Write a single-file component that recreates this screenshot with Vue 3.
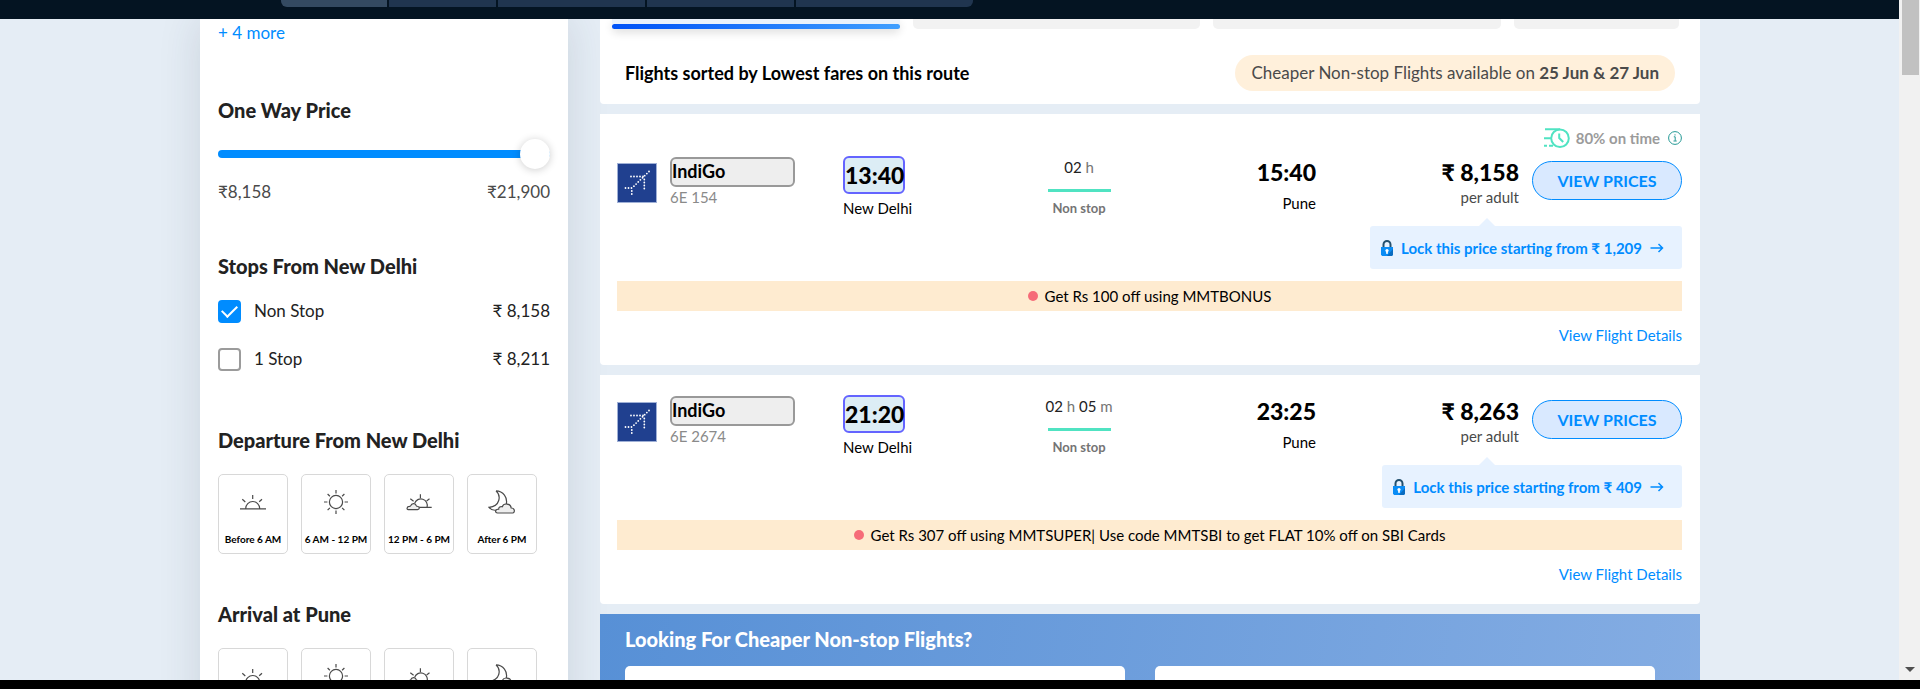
<script setup>
import { ref } from 'vue'

const tripTabs = ['From', 'To', 'Depart', 'Return', 'Travellers']
const price = ref(21900)
const stops = ref([
  { id: 'nonstop', label: 'Non Stop', fare: '₹ 8,158', checked: true },
  { id: 'onestop', label: '1 Stop', fare: '₹ 8,211', checked: false }
])
const icons = ['sunrise', 'sun', 'cloudsun', 'moon']
const timeGroups = [
  { title: 'Departure From New Delhi', labels: ['Before 6 AM', '6 AM - 12 PM', '12 PM - 6 PM', 'After 6 PM'] },
  { title: 'Arrival at Pune', labels: [] }
]
const flights = [
  {
    code: '6E 154', depart: '13:40', arrive: '15:40', hours: '02', minutes: '',
    fare: '₹ 8,158', lock: '₹ 1,209', onTime: '80% on time',
    promo: 'Get Rs 100 off using MMTBONUS'
  },
  {
    code: '6E 2674', depart: '21:20', arrive: '23:25', hours: '02', minutes: '05',
    fare: '₹ 8,263', lock: '₹ 409', onTime: '',
    promo: 'Get Rs 307 off using MMTSUPER| Use code MMTSBI to get FLAT 10% off on SBI Cards'
  }
]
</script>

<template>
  <div class="shell">
    <div class="page">
      <header class="topbar">
        <div class="trip">
          <span v-for="tab in tripTabs" :key="tab" class="trip-part"></span>
        </div>
      </header>

      <div class="content">
        <aside class="filters">
          <a href="#" class="more">+ 4 more</a>

          <section class="group price-group">
            <h2><label for="price">One Way Price</label></h2>
            <input id="price" v-model="price" class="slider" type="range" min="8158" max="21900">
            <div class="range-labels"><span>₹8,158</span><span>₹21,900</span></div>
          </section>

          <section class="group stops-group">
            <h2>Stops From New Delhi</h2>
            <div v-for="s in stops" :key="s.id" class="stop">
              <input :id="s.id" v-model="s.checked" type="checkbox">
              <label :for="s.id">{{ s.label }}</label>
              <span class="stop-fare">{{ s.fare }}</span>
            </div>
          </section>

          <section v-for="g in timeGroups" :key="g.title" class="group time-group">
            <h2>{{ g.title }}</h2>
            <div class="slots">
              <button v-for="(icon, i) in icons" :key="icon" type="button" class="slot">
                <svg class="slot-icon" viewBox="0 0 28 28" aria-hidden="true">
                  <g v-if="icon === 'sunrise'">
                    <path d="M1 20.8h26M6.7 20.5a7 7 0 0 1 14 0M13.7 7v4M3.3 11.3l3 2.7M23 11.2l-2.8 2.6" />
                  </g>
                  <g v-else-if="icon === 'sun'">
                    <circle cx="14" cy="14" r="6.6" />
                    <path d="M14 2v3.4M14 22.6V26M2 14h3.4M22.6 14H26M5.6 6l2.3 2.2M22.4 6l-2.3 2.2M5.6 22.2l2.3-2.4M22.4 22.2l-2.3-2.4" />
                  </g>
                  <g v-else-if="icon === 'cloudsun'">
                    <path d="M13 19.4h13.7M9.6 15.4a6.4 6.4 0 0 1 12.4 4M15.4 6.3v3.6M5.3 10.7l3.3 2.5M24.5 10.7l-2.9 2.2" />
                    <path class="cloud" d="M3.2 21.6h9.4c2.2 0 2.2-3 .1-3.1-.9-.1-1.2-.5-1.5-1.1-1.1-2.5-4.6-2.4-5.4.2-.2.7-.7.7-1.4.8-2.8.2-2.9 3.2-1.2 3.2z" />
                  </g>
                  <g v-else>
                    <path d="M8 2.9c6.8.2 12.4 6.3 10 14.5M8 2.9c5.3 4.800 4.300 15.300-7 16.400 1.700 2.200 4 3.100 6.600 2.900" />
                    <path class="cloud" d="M9.5 25h15.200c2.300-.2 2.600-4.900-1.500-5-.5-4.700-7.700-5.400-8.900-1.200-2-.6-3.700.6-3.600 2.400-4 .1-3.900 3.600-1.200 3.800z" />
                  </g>
                </svg>
                <span v-if="g.labels[i]">{{ g.labels[i] }}</span>
              </button>
            </div>
          </section>
        </aside>

        <main class="results">
          <section class="card summary">
            <div class="sort-tabs">
              <div class="sort-tab active"></div>
              <div class="sort-tab"></div>
              <div class="sort-tab"></div>
              <div class="sort-tab"></div>
            </div>
            <div class="summary-row">
              <h1>Flights sorted by Lowest fares on this route</h1>
              <p class="pill">Cheaper Non-stop Flights available on <b>25 Jun &amp; 27 Jun</b></p>
            </div>
          </section>

          <article v-for="f in flights" :key="f.code" class="card flight">
            <div v-if="f.onTime" class="ontime">
              <svg class="clock" viewBox="0 0 26 22" aria-hidden="true">
                <circle cx="16" cy="11.3" r="8.800" />
                <path d="M1 2.300h15M0 11.300h7M0 18.800h3M5 18.800h4M15.200 6.500v4.500l4 4" />
              </svg>
              <span>{{ f.onTime }}</span>
              <svg class="info" viewBox="0 0 14 14" aria-hidden="true">
                <circle cx="7" cy="7" r="6.400" />
                <path d="M5.800 5.800h1.400v4M5.500 10h3.200M7 3.300v1.200" />
              </svg>
            </div>

            <div class="flight-row">
              <div class="airline">
                <svg class="logo" viewBox="0 0 40 40" aria-hidden="true">
                  <rect x=".5" y=".5" width="39" height="39" />
                  <path d="M32 8.500L15 25M14 13.500h13.500M27.300 16.500v10.500M8.500 25h7M14.800 28v5" />
                </svg>
                <div class="airline-text">
                  <div class="airline-name">IndiGo</div>
                  <div class="code">{{ f.code }}</div>
                </div>
              </div>
              <div class="depart">
                <div class="time-box">{{ f.depart }}</div>
                <div class="city">New Delhi</div>
              </div>
              <div class="duration">
                <div>{{ f.hours }} <i>h</i><template v-if="f.minutes">{{ ' ' + f.minutes }} <i>m</i></template></div>
                <div class="bar"></div>
                <div class="nonstop">Non stop</div>
              </div>
              <div class="arrive">
                <div class="time">{{ f.arrive }}</div>
                <div class="city">Pune</div>
              </div>
              <div class="fare">
                <div class="time">{{ f.fare }}</div>
                <div class="per">per adult</div>
              </div>
              <button type="button" class="view">VIEW PRICES</button>
            </div>

            <a href="#" class="lock">
              <svg class="padlock" viewBox="0 0 12 16" aria-hidden="true">
                <path class="shackle" d="M2.500 8V4.500a3.500 3.500 0 0 1 7 0V8" />
                <path class="body-left" d="M0 7h12v7.500L11 16H1l-1-1.500z" />
                <path class="body-right" d="M6 16l6-7v5.500L11 16z" />
                <circle cx="6" cy="10.500" r="1.600" />
                <path class="key" d="M5.300 11h1.400l.3 2.800H5z" />
              </svg>
              <span>Lock this price starting from {{ f.lock }}</span>
              <svg class="arrow" viewBox="0 0 14 12" aria-hidden="true"><path d="M.5 6h12M8.500 2l4 4-4 4" /></svg>
            </a>
            <p class="promo"><span class="dot"></span>{{ f.promo }}</p>
            <a href="#" class="details">View Flight Details</a>
          </article>

          <section class="banner">
            <h2>Looking For Cheaper Non-stop Flights?</h2>
            <div class="offers"><div class="offer"></div><div class="offer"></div></div>
          </section>
        </main>
      </div>
    </div>

    <div class="scrollbar" aria-hidden="true">
      <div class="thumb"></div>
      <svg viewBox="0 0 12 6"><path d="M0 0h12L6 6z" /></svg>
    </div>
    <div class="footer-strip"></div>
  </div>
</template>

<style>
body { margin: 0; background: #e5edf5; }
</style>

<style scoped>
* { box-sizing: border-box; }
h1, h2, p { margin: 0; }
a { color: #008cff; text-decoration: none; }
button { font-family: inherit; cursor: pointer; }

.shell {
  display: grid;
  grid-template-columns: minmax(0, 1fr) 20px;
  grid-template-rows: minmax(0, 1fr) 9px;
  height: 100vh;
  overflow: hidden;
  font-family: "Lato", "Liberation Sans", sans-serif;
  font-size: 15px;
  line-height: 18px;
  color: #000;
}
.page { display: flex; flex-direction: column; overflow: hidden; background: #e5edf5; }
.topbar { position: relative; z-index: 2; flex: 0 0 19px; background: #041422; }
.trip {
  display: grid;
  grid-template-columns: 106px 107px 147px 147px 1fr;
  gap: 2px;
  width: 692px;
  height: 7px;
  margin-left: 281px;
  border-radius: 0 0 6px 6px;
  overflow: hidden;
}
.trip-part { background: #20354f; }
.trip-part:first-child { background: #344a61; }

.content {
  flex: 1;
  min-height: 0;
  display: grid;
  grid-template-columns: 368px minmax(0, 1fr);
  gap: 32px;
  width: 100%;
  max-width: 1500px;
  margin: 0 auto;
}

.filters {
  padding: 3px 18px 0;
  background: #fff;
  box-shadow: 0 0 40px rgba(40, 60, 80, 0.14);
}
.more { display: block; font-size: 17px; line-height: 22px; }
.group h2 { font-size: 20px; line-height: 24px; font-weight: 900; color: #222; }
.price-group { margin-top: 54px; }
.slider {
  appearance: none;
  display: block;
  width: 100%;
  height: 30px;
  margin: 17px 0 0;
  background: transparent;
}
.slider::-webkit-slider-runnable-track { height: 8px; border-radius: 4px; background: #008cff; }
.slider::-webkit-slider-thumb {
  appearance: none;
  width: 30px;
  height: 30px;
  margin-top: -11px;
  border: 0;
  border-radius: 50%;
  background: #fff;
  box-shadow: 0 1px 8px rgba(0, 0, 0, 0.2);
}
.range-labels {
  display: flex;
  justify-content: space-between;
  margin-top: 12px;
  font-size: 17px;
  line-height: 22px;
  color: #4a4a4a;
}
.stops-group { margin-top: 51px; }
.stop { display: flex; align-items: center; height: 24px; margin-top: 24px; font-size: 17px; color: #222; }
h2 + .stop { margin-top: 21px; }
.stop input {
  appearance: none;
  display: grid;
  place-items: center;
  width: 23px;
  height: 23px;
  margin: 0 13px 0 0;
  border: 2px solid #9b9b9b;
  border-radius: 4px;
  background: #fff;
}
.stop input:checked { border-color: #008cff; background: #008cff; }
.stop input:checked::before {
  content: "";
  width: 13px;
  height: 7px;
  margin-top: -4px;
  border: solid #fff;
  border-width: 0 0 2px 2px;
  transform: rotate(-45deg);
}
.stop-fare { margin-left: auto; }
.time-group { margin-top: 48px; }
.stops-group + .time-group { margin-top: 57px; }
.slots { display: grid; grid-template-columns: repeat(4, 70px); gap: 13px; margin-top: 22px; }
.slot {
  display: flex;
  flex-direction: column;
  align-items: center;
  gap: 17px;
  height: 80px;
  padding: 13px 0 0;
  border: 1px solid #d8d8d8;
  border-radius: 5px;
  background: #fff;
  color: #000;
  font-size: 10px;
  line-height: 12px;
  font-weight: 700;
  white-space: nowrap;
}
.slot-icon { width: 28px; height: 28px; flex: none; fill: none; stroke: #4a4a4a; stroke-width: 1.2; }
.cloud { fill: #eee; }

.results { display: flex; flex-direction: column; gap: 10px; min-width: 0; }
.card { flex: none; background: #fff; border-radius: 0 0 4px 4px; }
.summary { height: 85px; padding: 0 25px; }
.sort-tabs { display: grid; grid-template-columns: 288fr 288fr 288fr 165fr; gap: 13px; margin: 0 -4px 0 -13px; }
.sort-tab { height: 10px; border-radius: 0 0 5px 5px; background: #f2f2f2; }
.sort-tab.active {
  padding-top: 5px;
  background: #eaf2fb;
  box-shadow: 0 4px 8px rgba(0, 0, 0, 0.12);
}
.sort-tab.active::after {
  content: "";
  display: block;
  height: 5px;
  border-radius: 3px;
  background: linear-gradient(90deg, #0053f7, #0a60f8 20%, #3f9fff);
}
.summary-row { display: flex; align-items: center; justify-content: space-between; margin-top: 26px; }
h1 { font-size: 18px; line-height: 22px; font-weight: 700; }
.pill {
  padding: 7px 16px;
  border-radius: 18px;
  background: #fff0db;
  color: #4a4a4a;
  font-size: 17px;
  line-height: 22px;
}

.flight { display: flex; flex-direction: column; padding: 12px 18px 21px 17px; }
.ontime {
  display: flex;
  align-items: center;
  justify-content: flex-end;
  height: 22px;
  gap: 6px;
  padding-top: 2px;
  color: #9b9b9b;
  font-weight: 700;
}
.clock { width: 26px; height: 22px; fill: none; stroke: #50e3c2; stroke-width: 2; }
.info { width: 14px; height: 14px; margin-left: 2px; fill: none; stroke: #249995; stroke-width: 1; }
.flight-row {
  display: grid;
  grid-template-columns: 226fr 183fr 106fr 184fr 203fr 163fr;
  height: 78px;
}
.airline { display: flex; gap: 13px; padding-top: 9px; }
.logo { width: 40px; height: 40px; margin-top: 6px; }
.logo rect { fill: #20408f; stroke: #9fb0d6; }
.logo path { fill: none; stroke: #fff; stroke-width: 1.8; stroke-linecap: round; stroke-dasharray: 0 3; }
.airline-text { width: 125px; }
.airline-name {
  height: 30px;
  border: 2px solid #999;
  border-radius: 6px;
  background: #eee;
  font-size: 18px;
  line-height: 25px;
  font-weight: 700;
}
.code { margin-top: 1px; color: #8a8a8a; }
.depart { padding-top: 8px; }
.time-box {
  width: 62px;
  height: 38px;
  border: 2px solid #6464ff;
  border-radius: 6px;
  background: #dcedf5;
  font-size: 23px;
  line-height: 34px;
  font-weight: 900;
  text-align: center;
}
.depart .city { margin-top: 5px; }
.duration { display: flex; flex-direction: column; align-items: center; padding-top: 10px; color: #222; white-space: nowrap; }
.duration i { font-style: normal; color: #747474; }
.bar { width: 63px; height: 3px; margin: 13px 0 8px; background: #50e3c2; }
.nonstop { font-size: 13px; line-height: 16px; font-weight: 700; color: #747474; }
.time { font-size: 23px; line-height: 28px; font-weight: 900; }
.arrive, .fare { padding-top: 10px; text-align: right; }
.arrive .city { margin-top: 8px; }
.per { margin-top: 2px; color: #4a4a4a; }
.view {
  height: 39px;
  margin: 13px 0 0 13px;
  padding: 0;
  border: 1px solid #008cff;
  border-radius: 20px;
  background: #d9e9ff;
  color: #008cff;
  font-size: 16px;
  font-weight: 700;
}
.lock {
  position: relative;
  display: flex;
  align-items: center;
  align-self: flex-end;
  height: 43px;
  padding: 0 18px 0 11px;
  border-radius: 3px;
  background: #e7f2ff;
  font-weight: 700;
}
.lock::before {
  content: "";
  position: absolute;
  right: 187px;
  bottom: 100%;
  border: 8px solid transparent;
  border-top: 0;
  border-bottom-color: #e7f2ff;
}
.padlock { width: 12px; height: 16px; margin-right: 8px; }
.shackle { fill: none; stroke: #23506e; stroke-width: 2; }
.body-left { fill: #0a8cf5; }
.body-right { fill: #0a6cc0; }
.padlock circle, .key { fill: #fff; }
.arrow { width: 14px; height: 12px; margin-left: 8px; fill: none; stroke: #008cff; stroke-width: 1.5; }
.promo {
  display: flex;
  align-items: center;
  justify-content: center;
  height: 30px;
  margin-top: 12px;
  background: #feebd0;
}
.dot { width: 10px; height: 10px; margin-right: 7px; border-radius: 50%; background: #f66b78; }
.details { align-self: flex-end; margin-top: 15px; }

.banner {
  flex: none;
  padding: 13px 45px 0 25px;
  height: 160px;
  background: linear-gradient(100deg, #5790d6, #85ade3);
}
.banner h2 { color: #fff; font-size: 20px; line-height: 24px; font-weight: 900; }
.offers { display: grid; grid-template-columns: 1fr 1fr; gap: 30px; margin-top: 15px; }
.offer { height: 100px; border-radius: 5px; background: #fff; }

.scrollbar {
  display: flex;
  flex-direction: column;
  justify-content: space-between;
  align-items: center;
  z-index: 3;
  padding-bottom: 8px;
  background: #f1f1f1;
  box-shadow: -1px 0 0 #f1f1f1;
}
.thumb { width: 17px; height: 75px; background: #c1c1c1; }
.scrollbar svg { width: 10px; height: 5px; fill: #505050; }
.footer-strip { grid-column: 1 / -1; z-index: 4; background: #000; }
</style>
